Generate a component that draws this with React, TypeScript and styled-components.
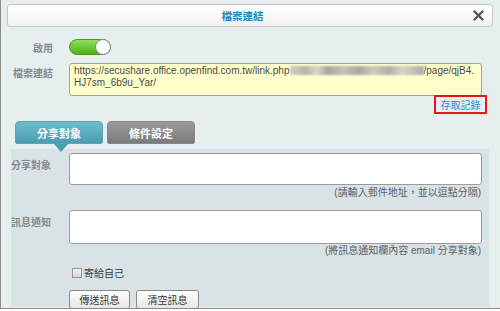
import React, { useState } from 'react'
import styled, { createGlobalStyle } from 'styled-components'

const GlobalStyle = createGlobalStyle`
  body {
    margin: 0;
    background: #ffffff;
    font-family: "Liberation Sans", "Noto Sans CJK TC", sans-serif;
  }
`

const Dialog = styled.div`
  box-sizing: border-box;
  width: 500px;
  height: 309px;
  padding-top: 4px;
  background: #e7eef0;
  border-left: 1px solid #8c8c8c;
  border-bottom: 1px solid #8c8c8c;
`

const TitleBar = styled.div`
  box-sizing: border-box;
  display: flex;
  align-items: center;
  height: 23px;
  margin: 0 7px 0 6px;
  padding: 0 8px 0 4px;
  background: linear-gradient(#ffffff, #f1f1f1);
  border: 1px solid #c9c9c9;
  border-radius: 3px;
`

const Title = styled.div`
  flex: 1;
  text-align: center;
  font-size: 10.5px;
  font-weight: bold;
  color: #1a8ac2;
`

const CloseButton = styled.button`
  width: 11px;
  height: 11px;
  padding: 0;
  border: 0;
  background: none;
  display: flex;
  cursor: pointer;
`

const Top = styled.div`
  padding-left: 10px;
`

const FormRow = styled.div<{ $top: number; $align?: string }>`
  display: grid;
  grid-template-columns: 42px 413px;
  column-gap: 16px;
  align-items: ${(p) => p.$align || 'start'};
  margin-top: ${(p) => p.$top}px;
`

const Label = styled.div<{ $pad?: number }>`
  text-align: right;
  font-size: 10px;
  font-weight: bold;
  color: #868b8e;
  white-space: nowrap;
  padding-top: ${(p) => p.$pad || 0}px;
`

const Toggle = styled.div<{ $on: boolean }>`
  box-sizing: border-box;
  width: 42px;
  height: 16px;
  border-radius: 8px;
  border: 1px solid ${(p) => (p.$on ? '#4b9a1d' : '#999')};
  background: ${(p) => (p.$on ? 'linear-gradient(#8fe05a, #4fae1c)' : 'linear-gradient(#ddd, #bbb)')};
  display: flex;
  justify-content: ${(p) => (p.$on ? 'flex-end' : 'flex-start')};
  cursor: pointer;
`

const Knob = styled.div`
  box-sizing: border-box;
  width: 16px;
  height: 16px;
  margin: -1px;
  border-radius: 50%;
  background: radial-gradient(circle at 50% 40%, #ffffff 55%, #e4e4e4);
  border: 1px solid #8a8a8a;
`

const LinkBox = styled.div`
  box-sizing: border-box;
  height: 33px;
  padding: 1px 4px;
  background: #ffffcc;
  border: 1px solid #a3a3a3;
  border-radius: 3px;
  font-size: 10px;
  line-height: 12px;
  color: #4a4a4a;
  white-space: nowrap;
  overflow: hidden;
`

const Blur = styled.span`
  display: inline-block;
  width: 134px;
  height: 9px;
  vertical-align: -1px;
  background: linear-gradient(
    90deg,
    #cfcfc4 0%,
    #b4b4ac 12%,
    #d8d8ca 20%,
    #a6a6a0 28%,
    #c2c2b8 40%,
    #a9a9a2 52%,
    #cacabf 62%,
    #b0b0a9 74%,
    #d4d4c8 84%,
    #adada6 100%
  );
  filter: blur(1px);
`

const RecordRow = styled.div`
  display: flex;
  justify-content: flex-end;
  margin-top: -1px;
  padding-right: 13px;
`

const RecordLink = styled.a`
  box-sizing: border-box;
  width: 53px;
  height: 19px;
  border: 2px solid #e3161c;
  display: flex;
  align-items: center;
  justify-content: center;
  font-size: 10px;
  color: #2a8fcf;
  cursor: pointer;
`

const Tabs = styled.div`
  display: flex;
  gap: 4px;
  margin-top: 7px;
  padding-left: 14px;
`

const Tab = styled.div<{ $active: boolean }>`
  position: relative;
  width: 88px;
  height: 23px;
  display: flex;
  align-items: center;
  justify-content: center;
  border-radius: 4px 4px 2px 2px;
  font-size: 11px;
  font-weight: bold;
  color: #ffffff;
  cursor: pointer;
  background: ${(p) => (p.$active ? 'linear-gradient(#6fbccb, #4c9db0)' : 'linear-gradient(#9a9a9a, #7b7b7b)')};
  border: 1px solid ${(p) => (p.$active ? '#5aa6b6' : '#888')};
  box-sizing: border-box;

  &::after {
    content: '';
    display: ${(p) => (p.$active ? 'block' : 'none')};
    position: absolute;
    left: 38px;
    top: 22px;
    border-left: 7px solid transparent;
    border-right: 7px solid transparent;
    border-top: 8px solid #4c9db0;
  }
`

const Panel = styled.div`
  box-sizing: border-box;
  width: 478px;
  height: 158px;
  margin: 5px 0 0 10px;
  padding: 4px 7px 0 0;
  background: #d9e2e4;
`

const PanelRow = styled.div<{ $top: number }>`
  display: grid;
  grid-template-columns: 42px 413px;
  column-gap: 16px;
  align-items: start;
  margin-top: ${(p) => p.$top}px;
`

const PanelLabel = styled.div`
  font-size: 10px;
  font-weight: bold;
  color: #868b8e;
  white-space: nowrap;
  padding-top: 4px;
`

const TextBox = styled.textarea<{ $h: number }>`
  box-sizing: border-box;
  display: block;
  width: 413px;
  height: ${(p) => p.$h}px;
  margin: 0;
  resize: none;
  background: #ffffff;
  border: 1px solid #9b9b9b;
  border-radius: 3px;
  outline: none;
`

const Hint = styled.div<{ $top: number }>`
  margin-top: ${(p) => p.$top}px;
  padding-right: 1px;
  text-align: right;
  font-size: 10px;
  line-height: 12px;
  color: #5c6164;
`

const CheckRow = styled.label`
  display: flex;
  align-items: center;
  gap: 2px;
  margin: 8px 0 0 61px;
  font-size: 10px;
  color: #3c3c3c;
  cursor: pointer;
`

const Check = styled.span`
  box-sizing: border-box;
  width: 10px;
  height: 10px;
  border: 1px solid #9a9a9a;
  background: linear-gradient(#f4f4f4, #d6d6d6);
`

const Buttons = styled.div`
  display: flex;
  gap: 6px;
  margin: 10px 0 0 58px;
`

const Button = styled.button<{ $w: number }>`
  box-sizing: border-box;
  width: ${(p) => p.$w}px;
  height: 19px;
  padding: 0;
  font-family: inherit;
  font-size: 10px;
  color: #333;
  background: linear-gradient(#ffffff, #e6e6e6);
  border: 1px solid #8a8a8a;
  border-radius: 3px;
  cursor: pointer;
`

export default function App() {
  const [enabled, setEnabled] = useState(true)
  const [tab, setTab] = useState<'share' | 'cond'>('share')

  return (
    <>
      <GlobalStyle />
      <Dialog>
        <TitleBar>
          <Title>檔案連結</Title>
          <CloseButton aria-label="close">
            <svg width="11" height="11" viewBox="0 0 11 11">
              <path d="M1.5 1.5 L9.5 9.5 M9.5 1.5 L1.5 9.5" stroke="#555" strokeWidth="2.4" strokeLinecap="round" />
            </svg>
          </CloseButton>
        </TitleBar>

        <Top>
          <FormRow $top={12} $align="center">
            <Label>啟用</Label>
            <Toggle $on={enabled} onClick={(): void => setEnabled(!enabled)}>
              <Knob />
            </Toggle>
          </FormRow>

          <FormRow $top={8}>
            <Label $pad={2}>檔案連結</Label>
            <LinkBox>
              https://secushare.office.openfind.com.tw/link.php<Blur />/page/qjB4.
              <br />
              HJ7sm_6b9u_Yar/
            </LinkBox>
          </FormRow>
        </Top>

        <RecordRow>
          <RecordLink>存取記錄</RecordLink>
        </RecordRow>

        <Tabs>
          <Tab $active={tab === 'share'} onClick={(): void => setTab('share')}>分享對象</Tab>
          <Tab $active={tab === 'cond'} onClick={(): void => setTab('cond')}>條件設定</Tab>
        </Tabs>

        <Panel>
          <PanelRow $top={0}>
            <PanelLabel>分享對象</PanelLabel>
            <TextBox $h={32} />
          </PanelRow>
          <Hint $top={2}>(請輸入郵件地址，並以逗點分隔)</Hint>

          <PanelRow $top={11}>
            <PanelLabel>訊息通知</PanelLabel>
            <TextBox $h={34} />
          </PanelRow>
          <Hint $top={1}>(將訊息通知欄內容 email 分享對象)</Hint>

          <CheckRow>
            <Check />
            寄給自己
          </CheckRow>

          <Buttons>
            <Button $w={61}>傳送訊息</Button>
            <Button $w={63}>清空訊息</Button>
          </Buttons>
        </Panel>
      </Dialog>
    </>
  )
}
